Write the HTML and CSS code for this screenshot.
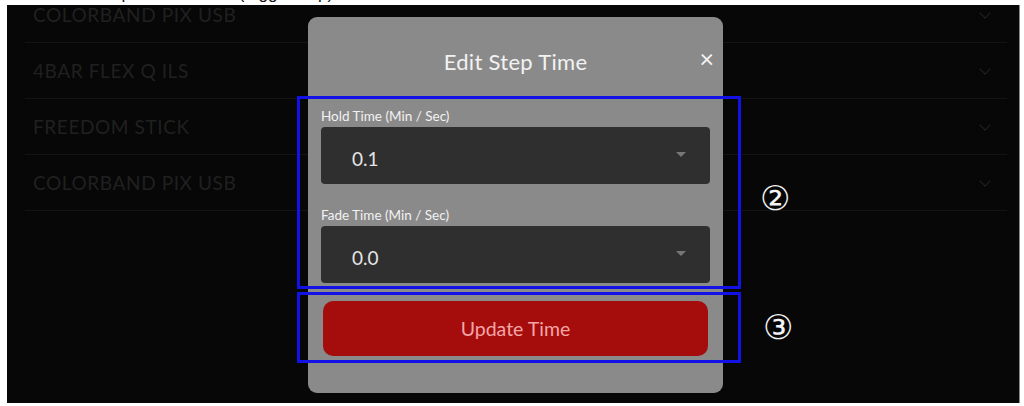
FILE: index.html
```html
<html>
<head>
<link rel="stylesheet" href="styles.css">
<title>Edit Step Time</title>
</head>
<body>
<div class="caption"><span>Step Time window (toggle step)</span></div>
<div class="panel">
  <div class="devices">
    <div class="row"><span>COLORBAND PIX USB</span><i class="chev"></i></div>
    <div class="row"><span>4BAR FLEX Q ILS</span><i class="chev"></i></div>
    <div class="row"><span>FREEDOM STICK</span><i class="chev"></i></div>
    <div class="row"><span>COLORBAND PIX USB</span><i class="chev"></i></div>
  </div>

  <div class="modal">
    <div class="modal-head">
      <span class="title">Edit Step Time</span>
      <span class="close">&#215;</span>
    </div>
    <div class="field">
      <label>Hold Time (Min / Sec)</label>
      <div class="select"><span>0.1</span><i class="caret"></i></div>
    </div>
    <div class="field">
      <label>Fade Time (Min / Sec)</label>
      <div class="select"><span>0.0</span><i class="caret"></i></div>
    </div>
    <button class="update">Update Time</button>
  </div>

  <div class="mark mark-fields"></div>
  <div class="mark mark-button"></div>
  <div class="num num-2">&#9313;</div>
  <div class="num num-3">&#9314;</div>
</div>
</body>
</html>
```

FILE: styles.css
```css
body {
  margin: 0;
  background: #fff;
  font-family: Lato, "Open Sans", sans-serif;
  overflow: hidden;
}

.caption {
  height: 5px;
  overflow: hidden;
  padding-left: 96px;
  font-family: "Liberation Sans", sans-serif;
  font-size: 17px;
  line-height: 6px;
  color: #111;
}
.caption span { display: block; margin-top: -9px; }

.panel {
  position: relative;
  height: 398px;
  margin: 0 4px 0 7px;
  background: #070707;
  overflow: hidden;
  border-right: 1px solid #888;
}

.devices {
  margin-top: -18px;
  padding: 0 12px 0 18px;
}
.row {
  display: flex;
  align-items: center;
  justify-content: space-between;
  height: 55px;
  padding: 0 18px 0 8px;
  border-bottom: 1px solid #131313;
  color: #202020;
  font-size: 19px;
  letter-spacing: 0.6px;
}
.chev {
  width: 7px;
  height: 7px;
  border-right: 1.5px solid #222;
  border-bottom: 1.5px solid #222;
  transform: rotate(45deg);
  margin-top: -4px;
}

.modal {
  position: absolute;
  left: 301px;
  top: 12px;
  width: 415px;
  height: 376px;
  box-sizing: border-box;
  padding: 0 13px;
  background: #8a8a8a;
  border-radius: 9px;
}
.modal-head {
  position: relative;
  display: flex;
  align-items: center;
  justify-content: center;
  height: 88px;
}
.title {
  font-size: 22px;
  letter-spacing: 0.3px;
  color: #f2f2f2;
}
.close {
  position: absolute;
  right: -4px;
  top: 26px;
  font-size: 25px;
  color: #f4f4f4;
}

.field label {
  display: block;
  font-size: 13.5px;
  line-height: 16px;
  color: #f2f2f2;
  margin-bottom: 3px;
  margin-top: 3px;
}
.field + .field label { margin-top: 23px; }
.select {
  display: flex;
  align-items: center;
  justify-content: space-between;
  height: 57px;
  padding: 0 24px 0 31px;
  background: #2f2f2f;
  border-radius: 4px;
  color: #e4e4e4;
  font-size: 19px;
}
.select span { margin-top: 6px; }
.caret {
  width: 0;
  height: 0;
  border-left: 5px solid transparent;
  border-right: 5px solid transparent;
  border-top: 5px solid #777;
  margin-top: -2px;
}

.update {
  display: block;
  width: 385px;
  height: 55px;
  margin: 18px auto 0;
  border: 0;
  border-radius: 10px;
  background: #a50d0d;
  color: #f4a6a6;
  font-family: Lato, sans-serif;
  font-size: 19.5px;
}

.mark {
  position: absolute;
  left: 290px;
  width: 438px;
  border: 3px solid #1212e6;
}
.mark-fields { top: 91px; height: 187px; }
.mark-button { top: 287px; height: 65px; }

.num {
  position: absolute;
  color: #f4f4f4;
  font-family: "DejaVu Sans", sans-serif;
  font-size: 34px;
  line-height: 36px;
}
.num-2 { left: 753px; top: 175px; }
.num-3 { left: 756px; top: 304px; }
```
